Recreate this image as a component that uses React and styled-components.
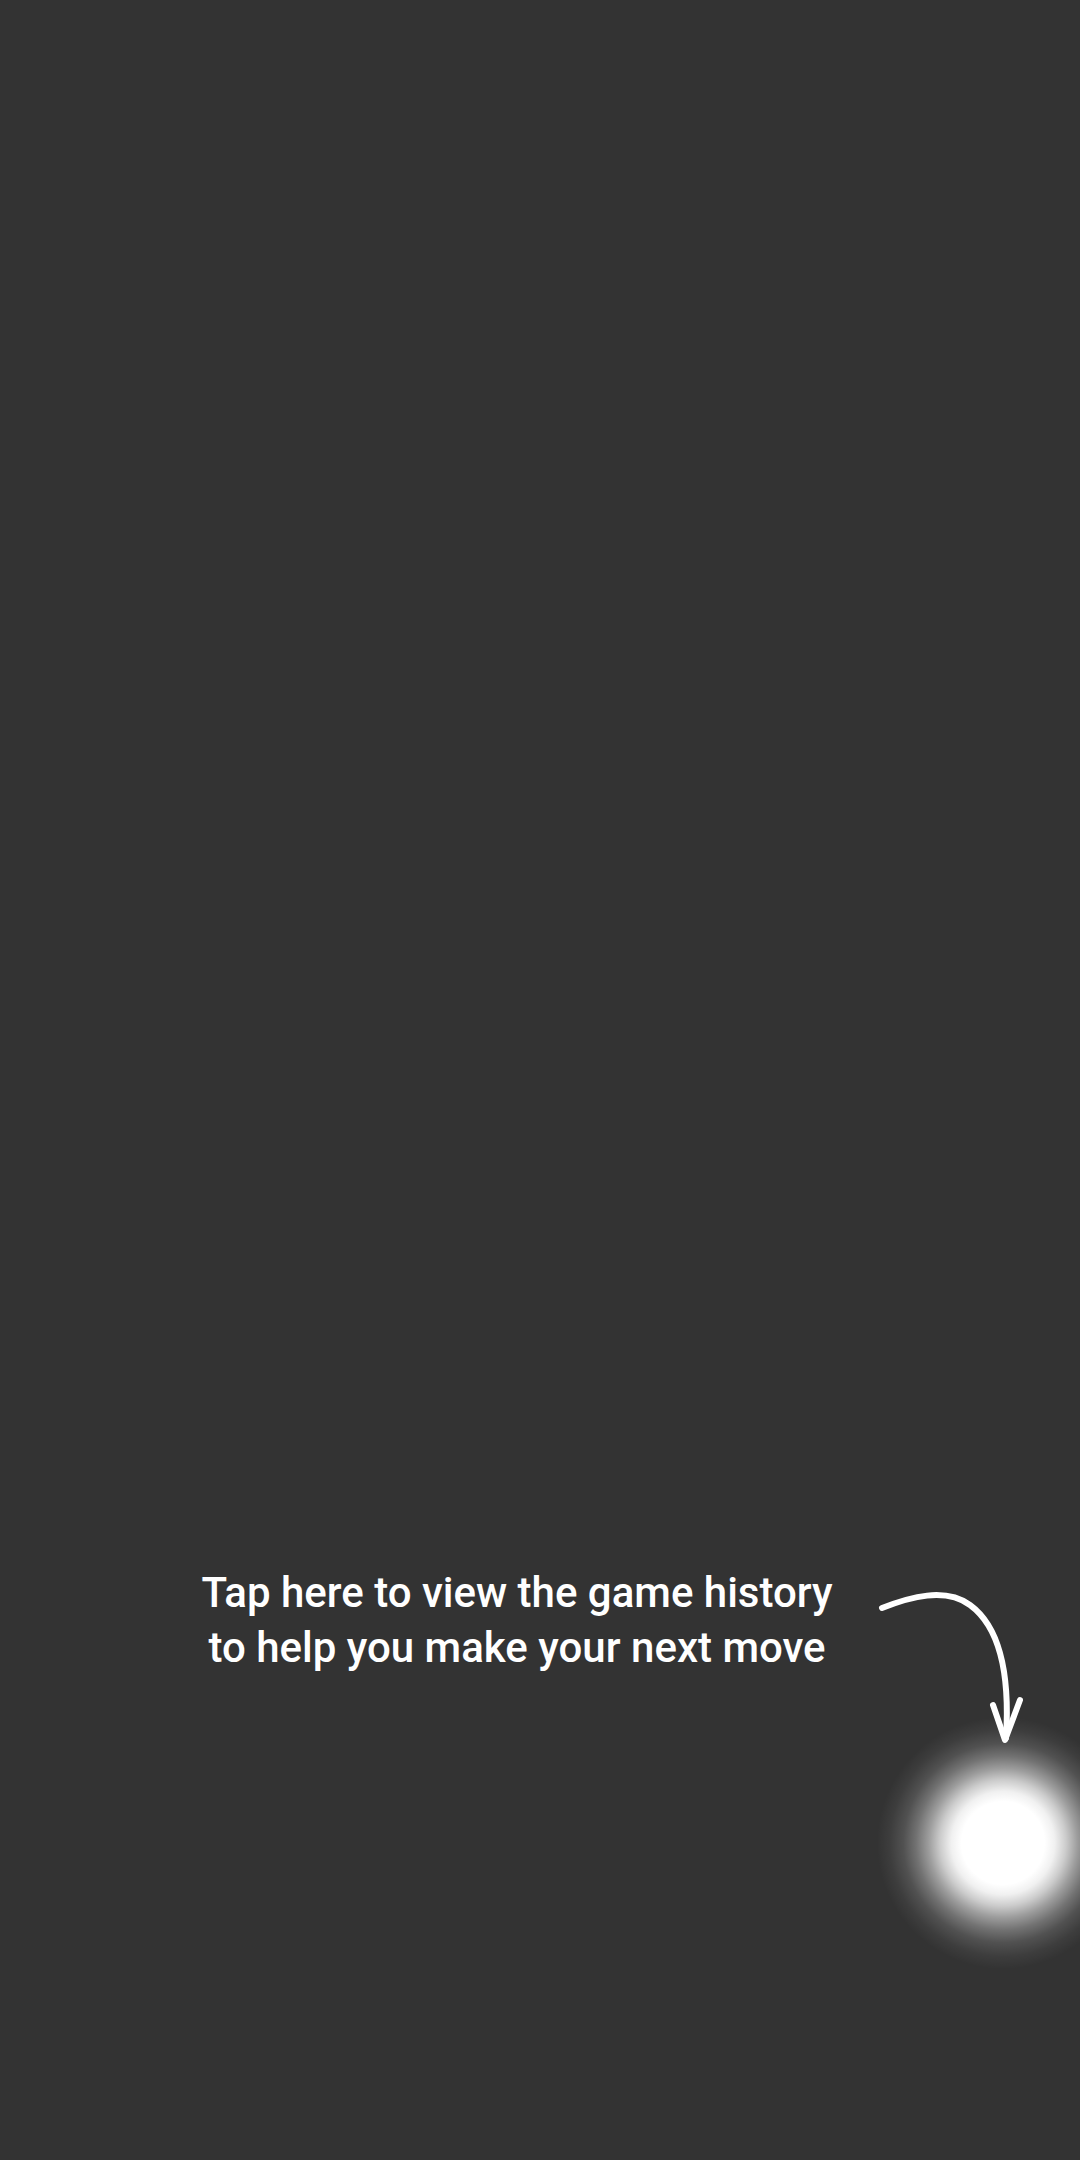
import React from "react";
import styled, { createGlobalStyle } from "styled-components";

const Global = createGlobalStyle`
  html, body { margin: 0; padding: 0; background: #333333; }
  #root { min-height: 2160px; }
`;

const Page = styled.div`
  position: relative;
  width: 1080px;
  height: 2160px;
  overflow: hidden;
  background: #333333;
  display: flex;
  flex-direction: column;
  padding-top: 1565px;
  box-sizing: border-box;
`;

const HintRow = styled.div`
  display: flex;
  align-items: flex-start;
`;

const HintText = styled.p`
  margin: 0 0 0 197px;
  width: 640px;
  flex: 0 0 auto;
  text-align: center;
  font-family: Roboto, "Noto Sans", sans-serif;
  font-weight: 500;
  font-size: 42px;
  line-height: 55px;
  color: #ffffff;
`;

const Arrow = styled.svg`
  flex: 0 0 auto;
  margin-left: 33px;
  margin-top: 20px;
  width: 160px;
  height: 165px;
`;

const Spotlight = styled.div`
  position: absolute;
  left: ${(p) => p.$cx - p.$r}px;
  top: ${(p) => p.$cy - p.$r}px;
  width: ${(p) => p.$r * 2}px;
  height: ${(p) => p.$r * 2}px;
  border-radius: 50%;
  background: radial-gradient(
    circle closest-side,
    #ffffff 0%,
    #ffffff 33%,
    rgba(255, 255, 255, 0.93) 41%,
    rgba(255, 255, 255, 0.75) 50%,
    rgba(255, 255, 255, 0.52) 59%,
    rgba(255, 255, 255, 0.31) 69%,
    rgba(255, 255, 255, 0.15) 79%,
    rgba(255, 255, 255, 0.05) 90%,
    rgba(255, 255, 255, 0) 100%
  );
`;

export default function App() {
  return (
    <>
      <Global />
      <Page>
        <HintRow>
          <HintText>
            Tap here to view the game history
            <br />
            to help you make your next move
          </HintText>
          <Arrow viewBox="0 0 160 165" fill="none">
            <path
              d="M12 23 C 40 12, 75 2, 100 20 C 130 42, 140 90, 136 153"
              stroke="#ffffff"
              strokeWidth="6"
              strokeLinecap="round"
            />
            <path
              d="M123 120 L135 155 L150 115"
              stroke="#ffffff"
              strokeWidth="6"
              strokeLinecap="round"
              strokeLinejoin="round"
            />
          </Arrow>
        </HintRow>
        <Spotlight $cx={1003} $cy={1843} $r={126} />
      </Page>
    </>
  );
}
